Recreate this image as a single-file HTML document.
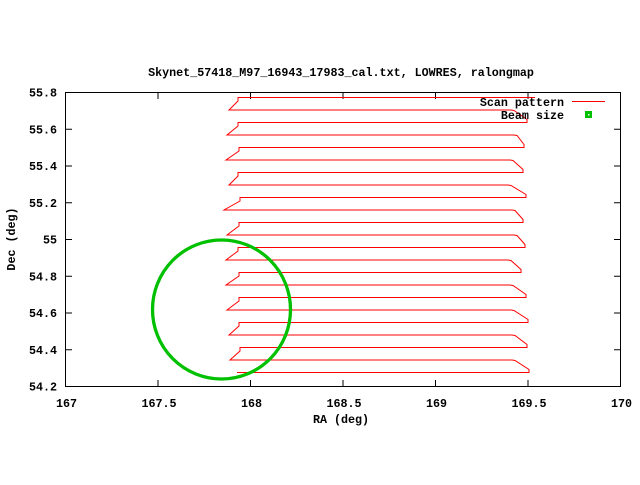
<!DOCTYPE html>
<html><head><meta charset="utf-8"><style>
html,body{margin:0;padding:0;background:#fff;}
svg text{font-family:"Liberation Mono",monospace;font-weight:bold;font-size:11.7px;fill:#000;}
</style></head><body>
<svg id="s" width="640" height="480" xmlns="http://www.w3.org/2000/svg">
<rect width="640" height="480" fill="#fff"/>
<text x="341" y="76" text-anchor="middle">Skynet_57418_M97_16943_17983_cal.txt, LOWRES, ralongmap</text>
<g id="ax" stroke="#000" stroke-width="1" fill="none">
<rect x="65.5" y="92.5" width="555" height="294"/>
</g>
<g id="lab"></g>
<path id="scan" fill="none" stroke="#f00" stroke-width="1" d=""/>
<ellipse cx="221.5" cy="309.5" rx="69" ry="69.5" fill="none" stroke="#00c000" stroke-width="3.3"/>
<text x="564" y="106" text-anchor="end">Scan pattern</text>
<line x1="572" y1="101.5" x2="605" y2="101.5" stroke="#f00"/>
<text x="564" y="119" text-anchor="end">Beam size</text>
<rect x="585" y="111" width="7" height="7" fill="#00c000"/>
<rect x="588" y="114" width="1.5" height="1.5" fill="#fff"/>
<text x="341" y="423" text-anchor="middle">RA (deg)</text>
<text transform="translate(15,239) rotate(-90)" text-anchor="middle">Dec (deg)</text>
</svg>
<script>
var ax=document.getElementById('ax'),lab=document.getElementById('lab'),NS='http://www.w3.org/2000/svg';
function el(t,a,p,txt){var e=document.createElementNS(NS,t);for(var k in a)e.setAttribute(k,a[k]);if(txt)e.textContent=txt;p.appendChild(e);}
var xl=['167','167.5','168','168.5','169','169.5','170'];
for(var k=0;k<7;k++){var x=65.5+92.5*k;
el('line',{x1:x,y1:386,x2:x,y2:380},ax);el('line',{x1:x,y1:93,x2:x,y2:99},ax);
el('text',{x:x+1,y:407,'text-anchor':'middle'},lab,xl[k]);}
var yl=['55.8','55.6','55.4','55.2','55','54.8','54.6','54.4','54.2'];
for(var k=0;k<9;k++){var y=92.5+36.75*k;
el('line',{x1:66,y1:y,x2:72,y2:y},ax);el('line',{x1:620,y1:y,x2:614,y2:y},ax);
el('text',{x:57,y:y+4,'text-anchor':'end'},lab,yl[k]);}
var d='',L=[238,229,238,227,239,226,238,229,240,224,239,227,238,226,239,226,239,227,239,229,240,230,237];
var R=[535,511,516,514,512,510,511,508,513,512,512,514,512,508,512,510,513,511,515,512,513,512,516];
var T=[531,527,524,523,526,523,525,521,526,528,527,529,527];
for(var i=0;i<23;i++){var y=97.5+12.5*i;
if(i==0)d+='M'+R[0]+' '+y+'L'+L[0]+' '+y;
else if(i%2==1){d+='L'+(L[i-1])+' '+(y-9)+'L'+L[i]+' '+y+'L'+R[i]+' '+y;}
else{d+='L'+(R[i-1]+3)+' '+(y-12)+'L'+(T[i/2|0]||525)+' '+(y-3)+'L'+(T[i/2|0]||525)+' '+y+'L'+L[i]+' '+y;}
}
document.getElementById('scan').setAttribute('d',d);
</script>
</body></html>
